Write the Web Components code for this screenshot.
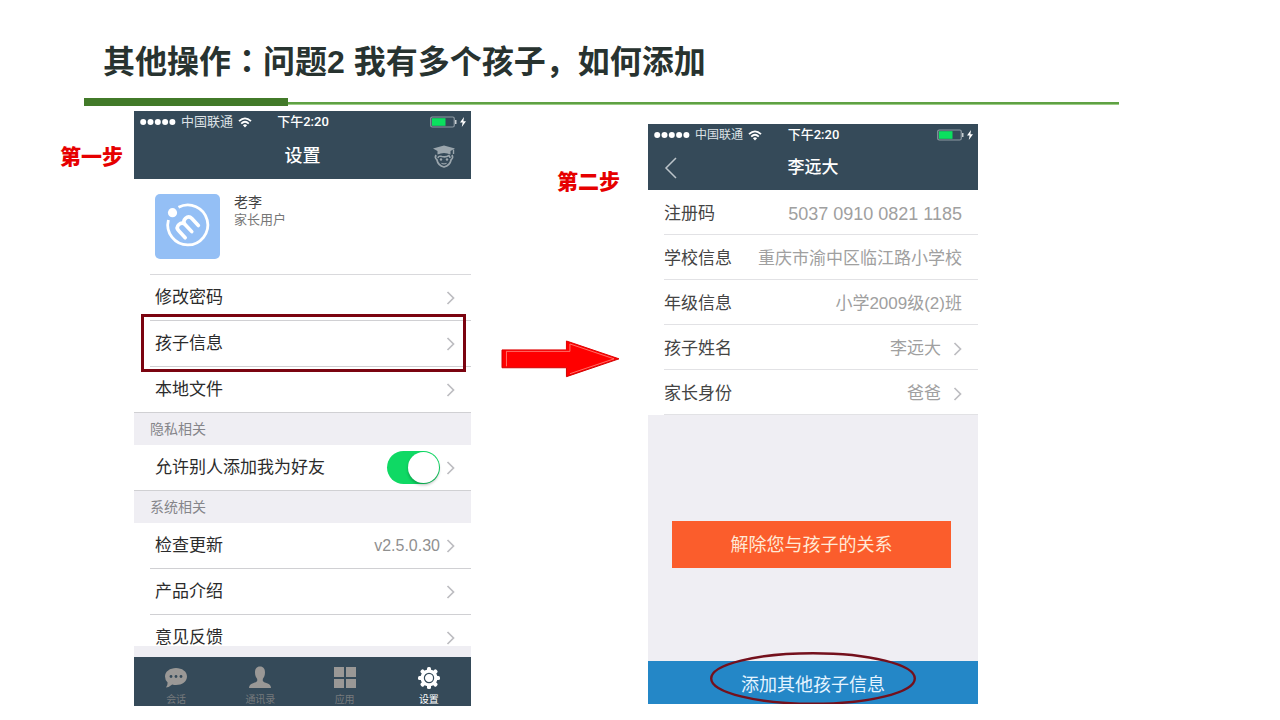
<!DOCTYPE html>
<html lang="zh-CN">
<head>
<meta charset="utf-8">
<meta name="viewport" content="width=device-width, initial-scale=1">
<title>其他操作：添加孩子</title>
<style>
  body { margin: 0; background: #fff; color: #2b2b2b; font-family: "Liberation Sans", "Noto Sans CJK SC", sans-serif; }
  .colon { font-family: "Noto Sans CJK TC", sans-serif; line-height: 1; }
  .steps { display: grid; grid-template-columns: 134fr 337fr 177fr 330fr 302fr; align-items: start; }
  .first { padding: 40px 11px 0 0; }
  .between { padding: 65px 28px 0 30px; }
  .settings { margin-top: 5px; --nav-height: 46px; --title-size: 18px; --carrier-size: 13px; }
  .child { margin-top: 18px; --nav-height: 44px; --title-size: 17px; --carrier-size: 12px; }
  .settings list-row { --row-height: 46px; --indent: 5px; }
  .child list-row { --row-height: 45px; --row-top: 3px; --label: #444; --value: #a0a0a0; --value-size: 17px; --value-gap: 12px; --divider: #e2e2e5; }
  .child .code { --value-size: 18px; }
</style>
</head>
<body>
<slide-header><span slot="title">其他操作<span class="colon" lang="zh-Hant">：</span>问题2 我有多个孩子，如何添加</span></slide-header>
<main class="steps">
  <step-label class="first">第一步</step-label>
  <phone-screen class="settings">
    <span slot="title">设置</span>
    <scholar-button slot="end"></scholar-button>
    <user-profile><span slot="name">老李</span><span slot="role">家长用户</span></user-profile>
    <list-row link>修改密码</list-row>
    <list-row link marked>孩子信息</list-row>
    <list-row link last>本地文件</list-row>
    <list-section>隐私相关</list-section>
    <list-row toggle last>允许别人添加我为好友</list-row>
    <list-section>系统相关</list-section>
    <list-row link>检查更新<span slot="value">v2.5.0.30</span></list-row>
    <list-row link>产品介绍</list-row>
    <list-row link cropped>意见反馈</list-row>
    <tab-bar slot="footer">
      <tab-item icon="chat">会话</tab-item>
      <tab-item icon="person">通讯录</tab-item>
      <tab-item icon="grid">应用</tab-item>
      <tab-item icon="gear" active>设置</tab-item>
    </tab-bar>
  </phone-screen>
  <div class="between">
    <step-label>第二步</step-label>
    <flow-arrow></flow-arrow>
  </div>
  <phone-screen class="child">
    <back-button slot="start"></back-button>
    <span slot="title">李远大</span>
    <list-row class="code">注册码<span slot="value">5037 0910 0821 1185</span></list-row>
    <list-row>学校信息<span slot="value">重庆市渝中区临江路小学校</span></list-row>
    <list-row>年级信息<span slot="value">小学2009级(2)班</span></list-row>
    <list-row link>孩子姓名<span slot="value">李远大</span></list-row>
    <list-row link>家长身份<span slot="value">爸爸</span></list-row>
    <unbind-panel>解除您与孩子的关系</unbind-panel>
    <add-child slot="footer">添加其他孩子信息</add-child>
  </phone-screen>
</main>
<script>
const define = (name, html, setup) => {
  const template = document.createElement('template');
  template.innerHTML = '<style>*{box-sizing:border-box}button{font:inherit;color:inherit;border:0;padding:0;margin:0;background:none;cursor:pointer}svg{display:block;flex:none}</style>' + html;
  customElements.define(name, class extends HTMLElement {
    constructor() {
      super();
      this.attachShadow({ mode: 'open' }).append(template.content.cloneNode(true));
    }
    connectedCallback() { if (setup) setup(this, this.shadowRoot); }
  });
};

define('slide-header', `
<style>
  :host { display: block; }
  h1 { margin: 0; padding: 38px 8% 0 103px; font-size: 32px; line-height: 48px; font-weight: 700; color: #283330; }
  .rule { display: grid; grid-template-columns: 84fr 204fr 831fr 161fr; height: 8px; margin-top: 12px; align-items: center; }
  .thick { grid-column: 2; height: 8px; background: #427a29; }
  .thin { height: 3px; margin-top: 3px; background: #5fa143; border-bottom: 1px solid #9ccb86; }
</style>
<h1><slot name="title"></slot></h1>
<div class="rule"><div class="thick"></div><div class="thin"></div></div>`);

define('step-label', `
<style>
  :host { display: block; text-align: right; font-size: 21px; line-height: 22px; font-weight: 900; color: #e60000; }
</style><slot></slot>`);

define('flow-arrow', `
<style>:host { display: block; margin-top: 147px; } svg { width: 100%; height: auto; }</style>
<svg viewBox="0 0 120 38" role="img" aria-label="下一步">
  <path d="M1 10H66V1L119 19L66 37V28H1Z" fill="#f00"/>
  <path d="M1 10H66V1L119 19" fill="none" stroke="#e00000" stroke-width="1"/>
  <path d="M1 10V28H66V37L119 19" fill="none" stroke="#d00000" stroke-width="1"/>
  <path d="M5.500 12V26.500M5 11.500H69.500V4L114 19L69.500 34" fill="none" stroke="#ff8a80" stroke-width=".8"/>
</svg>`);

define('status-bar', `
<style>
  :host { display: grid; grid-template-columns: 1fr auto 1fr; align-items: center; height: 22px; padding: 0 5px 0 6px; color: #fff; }
  .left { display: flex; align-items: center; gap: 5px; font-size: var(--carrier-size); line-height: 16px; color: #dde2e6; }
  .time { font: 500 13px/16px Roboto, "Noto Sans CJK SC", sans-serif; }
  .right { display: flex; align-items: center; justify-content: flex-end; gap: 3px; }
</style>
<div class="left">
  <svg width="36" height="8" viewBox="0 0 36 8" fill="#fff"><circle cx="3.200" cy="4" r="3"/><circle cx="10.500" cy="4" r="3"/><circle cx="17.800" cy="4" r="3"/><circle cx="25.100" cy="4" r="3"/><circle cx="32.400" cy="4" r="3"/></svg>
  <span>中国联通</span>
  <svg width="14" height="11" viewBox="0 0 14 11" fill="none" stroke="#fff" stroke-width="1.800"><path d="M1 4.200Q7-1.500 13 4.200M3.200 6.600Q7 3 10.800 6.600"/><path d="M4.900 8.200Q7 6.400 9.100 8.200L7 10.500Z" fill="#fff" stroke="none"/></svg>
</div>
<span class="time">下午2:20</span>
<div class="right">
  <svg width="27" height="12" viewBox="0 0 27 12"><rect x=".75" y="1" width="23.500" height="10" rx="1.500" fill="none" stroke="#8e9aa3" stroke-width="1.200"/><rect x="2" y="2.200" width="13.500" height="7.600" fill="#0be05f"/><path d="M25 4h1.500v4H25z" fill="#c8ced2"/></svg>
  <svg width="6" height="10" viewBox="0 0 6 10"><path d="M4 0L0 5.600H2.600L1.800 10L6 4.200H3.400Z" fill="#fff"/></svg>
</div>`);

define('phone-screen', `
<style>
  :host { display: block; min-width: 0; background: #efeef3; }
  header { background: #354a59; color: #fff; }
  .nav { display: grid; grid-template-columns: 1fr auto 1fr; align-items: center; height: var(--nav-height); padding: 0 16px; }
  h2 { margin: 0; font-size: var(--title-size); line-height: 24px; font-weight: 500; }
  .end { justify-self: end; }
</style>
<header>
  <status-bar></status-bar>
  <div class="nav"><div><slot name="start"></slot></div><h2><slot name="title"></slot></h2><div class="end"><slot name="end"></slot></div></div>
</header>
<section><slot></slot></section>
<footer><slot name="footer"></slot></footer>`);

define('scholar-button', `
<style>:host { display: block; } button { display: block; }</style>
<button type="button" aria-label="我的孩子"><svg width="22" height="23" viewBox="0 0 22 23">
  <path d="M0 3.500L11 .5L22 3.500L17.500 6V9.500Q11 6.500 4.500 9.500V6Z" fill="#9ba6ad"/>
  <path d="M20.500 4.500V9" stroke="#9ba6ad" stroke-width="1.400"/>
  <path d="M3 10Q1.500 13 3.800 14.500Q5 20.500 11 22Q17 20.500 18.200 14.500Q20.500 13 19 10" fill="none" stroke="#9ba6ad" stroke-width="1.700"/>
  <path d="M5 13Q5.500 10.500 9 11.500Q13 12.500 16 10.500Q17 11.500 17 13" fill="none" stroke="#9ba6ad" stroke-width="1.600"/>
  <circle cx="8" cy="14.500" r="1.200" fill="#9ba6ad"/><circle cx="14" cy="14.500" r="1.200" fill="#9ba6ad"/>
  <path d="M8.500 18.200Q11 19.500 13.500 18.200" fill="none" stroke="#9ba6ad" stroke-width="1.200"/>
</svg></button>`);

define('back-button', `
<style>:host { display: block; } button { display: block; }</style>
<button type="button" aria-label="返回"><svg width="13" height="22" viewBox="0 0 13 22"><path d="M12 1L2 11L12 21" fill="none" stroke="#bcc4ca" stroke-width="1.500"/></svg></button>`);

define('user-profile', `
<style>
  :host { display: block; background: #fff; padding-left: 16px; }
  .card { display: flex; gap: 14px; height: 96px; padding: 15px 5px; border-bottom: 1px solid #d9d9dc; }
  .name { font-size: 14px; line-height: 16px; color: #444; }
  .role { font-size: 13px; line-height: 20px; color: #777; }
</style>
<div class="card">
  <svg width="65" height="65" viewBox="0 0 65 65" role="img" aria-label="头像">
    <rect width="65" height="65" rx="5" fill="#94bff5"/>
    <path d="M23.500 13.200A20 20 0 1 1 13.400 26" fill="none" stroke="#fff" stroke-width="2.800"/>
    <circle cx="17.500" cy="18.700" r="4.600" fill="#fff"/>
    <g transform="translate(32 32.500) rotate(-43)" fill="none" stroke="#fff" stroke-width="3.600" stroke-linecap="round"><path d="M-9 7V-2.500Q-9-7-4.500-7Q0-7 0-2.500V7M0-2.500Q0-7 4.500-7Q9-7 9-2.500V7"/></g>
  </svg>
  <div><div class="name"><slot name="name"></slot></div><div class="role"><slot name="role"></slot></div></div>
</div>`);

define('list-section', `
<style>:host { display: block; padding: 6px 16px; background: #efeef3; color: #85858a; font-size: 14px; line-height: 20px; }</style><slot></slot>`);

define('list-row', `
<style>
  :host { display: block; position: relative; background: #fff; padding-left: 16px; font-size: 17px; line-height: 24px; }
  :host([last]) { padding-left: 0; }
  :host([last]) .row { padding-left: calc(16px + var(--indent, 0px)); }
  :host([cropped]) { height: 31px; margin-bottom: 11px; overflow: hidden; }
  :host([marked])::after { content: ""; position: absolute; z-index: 1; inset: -7px 5px -5px 7px; border: 3px solid #7b0410; pointer-events: none; }
  .row { display: flex; align-items: center; height: var(--row-height); padding: var(--row-top, 0px) 16px 0 var(--indent, 0px); border-bottom: 1px solid var(--divider, #d0d0d3); color: var(--label, #2b2b2b); text-decoration: none; white-space: nowrap; }
  .label { flex: 1; }
  .value { font-size: var(--value-size, 16px); color: var(--value, #909090); }
  .chevron { margin-left: var(--value-gap, 6px); }
  input { appearance: none; display: flex; align-items: center; justify-content: flex-end; width: 53px; height: 33px; margin: 0; padding: 1px; border-radius: 17px; background: #0fd964; cursor: pointer; }
  input::before { content: ""; width: 31px; height: 31px; border-radius: 50%; background: #fff; box-shadow: 0 2px 3px #0004; }
  input:not(:checked) { justify-content: flex-start; background: #ccc; }
</style>
<div class="row"><slot></slot></div>`, (host, root) => {
  const old = root.querySelector('.row');
  const link = host.hasAttribute('link'), toggle = host.hasAttribute('toggle');
  const row = document.createElement(link ? 'a' : toggle ? 'label' : 'div');
  row.className = 'row';
  if (link) row.href = '#';
  const chevron = '<svg class="chevron" width="9" height="14" viewBox="0 0 9 14"><path d="M1.500 1L7.500 7L1.500 13" fill="none" stroke="#bdbdc1" stroke-width="1.700"/></svg>';
  row.innerHTML = '<span class="label"><slot></slot></span>' +
    (toggle ? '<input type="checkbox" checked>' : '<span class="value"><slot name="value"></slot></span>') +
    (link || toggle ? chevron : '');
  old.replaceWith(row);
});

define('tab-bar', `
<style>:host { display: block; } nav { display: grid; grid-template-columns: repeat(4, 1fr); height: 49px; background: #354a59; overflow: hidden; }</style>
<nav><slot></slot></nav>`);

const tabIcons = {
  chat: '<path d="M12 2C18 2 23 5.500 23 10.500S18 19 12 19Q10 19 8.200 18.500Q5.500 21 2 21.500Q3.800 19 3.600 16.500Q1 14 1 10.500C1 5.500 6 2 12 2Z"/><g fill="#354a59"><circle cx="7" cy="10.500" r="1.400"/><circle cx="12" cy="10.500" r="1.400"/><circle cx="17" cy="10.500" r="1.400"/></g>',
  person: '<path d="M12 .5C15.500 .5 17 3 17 6.500C17 10 15.800 11.500 14.800 13V15Q15.500 16.200 19 17.200Q23 18.500 23 22H1Q1 18.500 5 17.200Q8.500 16.200 9.200 15V13C8.200 11.500 7 10 7 6.500C7 3 8.500 .5 12 .5Z"/>',
  grid: '<path d="M1 1H11V11H1ZM13 1H23V11H13ZM1 13H11V22H1ZM13 13H23V22H13Z"/>',
  gear: '<g><rect x="10" y="1" width="4" height="22" rx="1.500"/><rect x="10" y="1" width="4" height="22" rx="1.500" transform="rotate(45 12 12)"/><rect x="10" y="1" width="4" height="22" rx="1.500" transform="rotate(90 12 12)"/><rect x="10" y="1" width="4" height="22" rx="1.500" transform="rotate(135 12 12)"/><circle cx="12" cy="12" r="8.500"/></g><circle cx="12" cy="12" r="4.600" fill="none" stroke="#354a59" stroke-width="1.200"/>'
};
define('tab-item', `
<style>
  :host { display: block; color: #9a9896; --caption: #76797c; }
  :host([active]) { color: #fff; --caption: #fff; }
  a { display: flex; flex-direction: column; align-items: center; gap: 4px; padding-top: 9px; color: inherit; text-decoration: none; font-size: 10px; line-height: 12px; }
  span { color: var(--caption); }
</style>
<a href="#"><svg width="24" height="24" viewBox="0 0 24 24" fill="currentColor"></svg><span><slot></slot></span></a>`, (host, root) => {
  root.querySelector('svg').innerHTML = tabIcons[host.getAttribute('icon')];
});

define('unbind-panel', `
<style>
  :host { display: block; padding: 106px 27px 93px 24px; }
  button { display: block; width: 100%; height: 47px; background: #fb5d2c; color: #ffe9d6; font-size: 18px; line-height: 24px; }
</style><button type="button"><slot></slot></button>`);

define('add-child', `
<style>
  :host { display: block; position: relative; }
  button { display: block; width: 100%; height: 43px; padding-top: 4px; background: #2487c7; color: #e4f4ff; font-size: 18px; line-height: 24px; }
  .ring { position: absolute; left: 50%; bottom: 0; translate: -50% 0; width: 206px; height: 52px; pointer-events: none; }
</style><button type="button"><slot></slot></button>
<svg class="ring" viewBox="0 0 206 52"><ellipse cx="103" cy="26.500" rx="101.800" ry="25.300" fill="none" stroke="#74101c" stroke-width="2.400"/></svg>`);
</script>
</body>
</html>
